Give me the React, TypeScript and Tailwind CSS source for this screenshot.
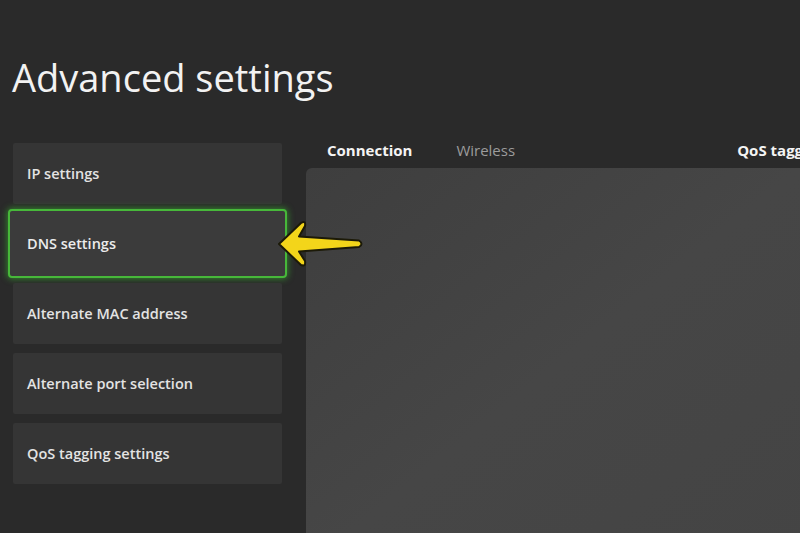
import React from 'react';

const items = [
  'IP settings',
  'DNS settings',
  'Alternate MAC address',
  'Alternate port selection',
  'QoS tagging settings',
];

function Arrow() {
  return (
    <svg
      aria-hidden="true"
      className="pointer-events-none absolute left-[274px] top-[217px]"
      width="96"
      height="54"
      viewBox="274 217 96 54"
    >
      <path
        d="M279 244 L301 223 Q306 220 305 226 L299 236.5 L359 240.5 Q364 244 359 247 L299 251.5 L305 261 Q306 267 301 265 Z"
        fill="#f3d51a"
        stroke="#1c1a08"
        strokeWidth="2"
        strokeLinejoin="round"
      />
    </svg>
  );
}

export default function App() {
  return (
    <div
      className="relative h-[533px] w-[800px] overflow-hidden bg-[#2a2a2a] text-white"
      style={{ fontFamily: '"Open Sans", "Noto Sans", sans-serif' }}
    >
      <h1 className="pl-[12px] pt-[51px] text-[38px] font-normal leading-[52px] text-[#f2f2f2]">
        Advanced settings
      </h1>
      <div className="mt-[30px] flex">
        <ul className="ml-[13px] mt-[10px] flex w-[269px] flex-col gap-[9px]">
          {items.map((label, i) =>
            i === 1 ? (
              <li
                key={label}
                className="-mx-[5px] -my-[4px] flex h-[69px] items-center rounded-[4px] border-[2px] border-[#47b83a] bg-[#3b3b3b] pl-[17px] text-[14.5px] font-semibold text-[#ececec] shadow-[0_0_6px_1px_rgba(60,200,50,0.55)]"
              >
                {label}
              </li>
            ) : (
              <li
                key={label}
                className="flex h-[61px] items-center rounded-[2px] bg-[#353535] pl-[14px] text-[14.5px] font-semibold text-[#e3e3e3]"
              >
                {label}
              </li>
            )
          )}
        </ul>
        <div className="ml-[24px] flex flex-1 flex-col overflow-hidden">
          <div className="flex h-[35px] items-center pl-[21px] text-[15px] font-bold">
            <span className="text-[#f4f4f4]">Connection</span>
            <span className="ml-[44px] font-normal text-[#9c9c9c]">Wireless</span>
            <span className="ml-auto mr-[-26px] whitespace-nowrap text-[#f4f4f4]">QoS tagging</span>
          </div>
          <div className="h-[400px] rounded-tl-[6px] bg-gradient-to-br from-[#3e3e3e] via-[#464646] to-[#444444]" />
        </div>
      </div>
      <Arrow />
    </div>
  );
}
